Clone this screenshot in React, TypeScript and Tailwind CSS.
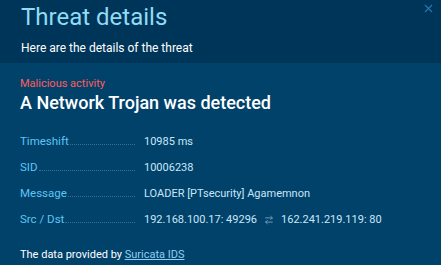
import { X, ArrowRightLeft } from 'lucide-react';

const rows = [
  { label: 'Timeshift', value: '10985 ms' },
  { label: 'SID', value: '10006238' },
  { label: 'Message', value: 'LOADER [PTsecurity] Agamemnon' },
];

function Label({ text }: { text: string }) {
  return (
    <div className="w-[124px] flex items-end overflow-hidden text-[#5ec4f2] text-[11.5px] leading-[14px]">
      <span className="whitespace-nowrap">{text}</span>
      <span className="flex-1 mb-[3px] ml-[1px] mr-[9px] border-b border-dotted border-[#336f99]"></span>
    </div>
  );
}

export default function App() {
  return (
    <div className="w-[441px] h-[265px] bg-[#01426b] relative overflow-hidden" style={{ fontFamily: 'Roboto, sans-serif' }}>
      <div className="h-[63px] bg-[#00355a] px-[21px] pt-[3px]">
        <h1 className="text-[24px] leading-[28px] text-[#8fdcf4]">Threat details</h1>
        <p className="text-white text-[12px] mt-[8px]">Here are the details of the threat</p>
      </div>
      <button className="absolute top-[2px] right-[6px] text-[#2878b0]">
        <X size={13} strokeWidth={2} />
      </button>

      <div className="px-[20px] pt-[14px]">
        <p className="text-[#ff5c5c] text-[11px] leading-[14px]">Malicious activity</p>
        <p className="text-white text-[18px] font-medium leading-[24px]">A Network Trojan was detected</p>

        <div className="mt-[19px] flex flex-col gap-[11px] text-[11px] leading-[14px]">
          {rows.map((r) => (
            <div key={r.label} className="flex items-baseline">
              <Label text={r.label} />
              <span className="text-[#c9e6f7]">{r.value}</span>
            </div>
          ))}
          <div className="flex items-baseline">
            <Label text="Src / Dst" />
            <span className="text-[#c9e6f7] flex items-center gap-[7px]">
              192.168.100.17: 49296
              <ArrowRightLeft size={10} className="text-[#7fa9c6]" />
              162.241.219.119: 80
            </span>
          </div>
        </div>

        <p className="mt-[20px] text-white text-[11px]">
          The data provided by{' '}
          <a href="#" className="text-[#8ed0f2] underline">Suricata IDS</a>
        </p>
      </div>
    </div>
  );
}
